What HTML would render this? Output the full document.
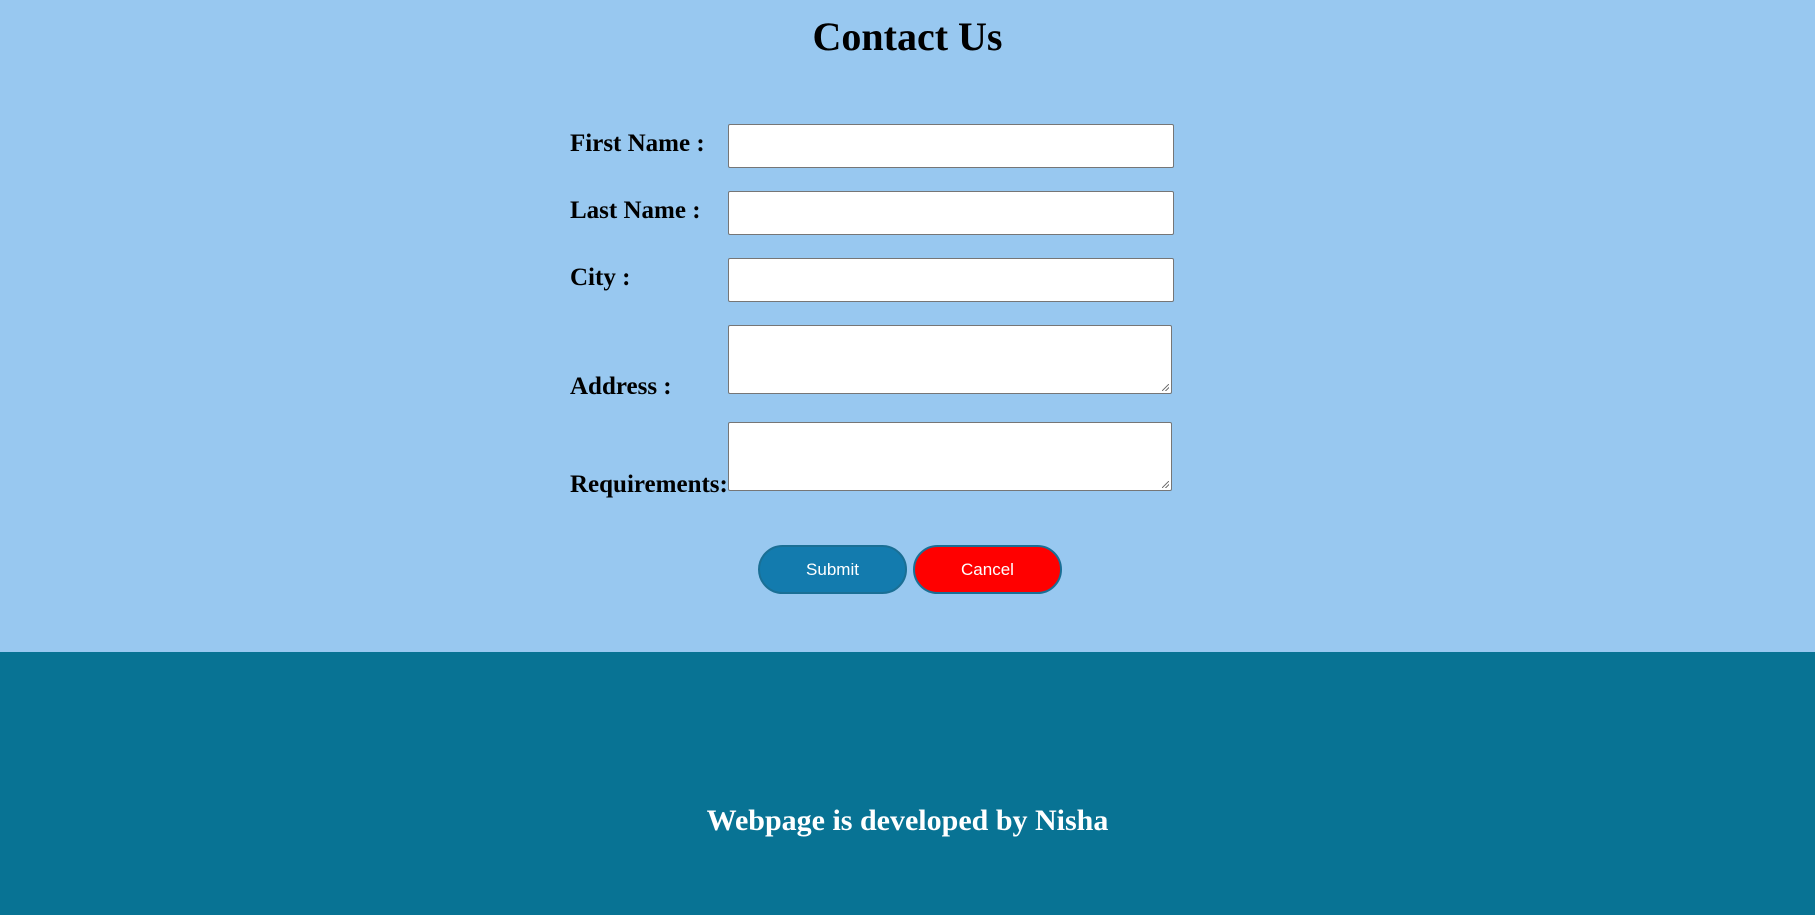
<!DOCTYPE html>
<html><head><meta charset="utf-8"><style>
html,body{margin:0;padding:0;width:1815px;height:915px;overflow:hidden;background:#98c8f0;font-family:"Liberation Serif",serif}
h1{position:absolute;margin:0;left:0;width:1815px;text-align:center;top:12px;font-size:40px;line-height:50px;font-weight:bold}
.lbl{position:absolute;left:570px;font-size:25px;font-weight:bold;line-height:30px}
.inp{position:absolute;left:728px;width:444px;height:42px;background:#fff;border:1px solid #767676;border-radius:2px}
.ta{position:absolute;left:728px;width:442px;height:67px;background:#fff;border:1px solid #767676;border-radius:2px}
.ta:after{content:"";position:absolute;right:2px;bottom:2px;width:7px;height:7px;background:linear-gradient(135deg,transparent 45%,#777 45%,#777 55%,transparent 55%,transparent 70%,#777 70%,#777 80%,transparent 80%)}
.btn{position:absolute;top:545px;width:145px;height:45px;border:2px solid #1a6f95;border-radius:26px;color:#fff;font-family:"Liberation Sans",sans-serif;font-size:17px;line-height:45px;text-align:center}
.foot{position:absolute;left:0;top:652px;width:1815px;height:263px;background:#087394}
.ft{position:absolute;left:0;width:1815px;text-align:center;top:801px;font-size:30px;font-weight:bold;color:#fff;line-height:40px}
</style></head><body>
<h1>Contact Us</h1>
<div class="lbl" style="top:129px">First Name :</div>
<div class="lbl" style="top:196px">Last Name :</div>
<div class="lbl" style="top:263px">City :</div>
<div class="lbl" style="top:372px">Address :</div>
<div class="lbl" style="top:470px">Requirements:</div>
<div class="inp" style="top:124px"></div>
<div class="inp" style="top:191px"></div>
<div class="inp" style="top:258px"></div>
<div class="ta" style="top:325px"></div>
<div class="ta" style="top:422px"></div>
<div class="btn" style="left:758px;background:#137bae">Submit</div>
<div class="btn" style="left:913px;background:#ff0000">Cancel</div>
<div class="foot"></div>
<div class="ft">Webpage is developed by Nisha</div>
</body></html>
